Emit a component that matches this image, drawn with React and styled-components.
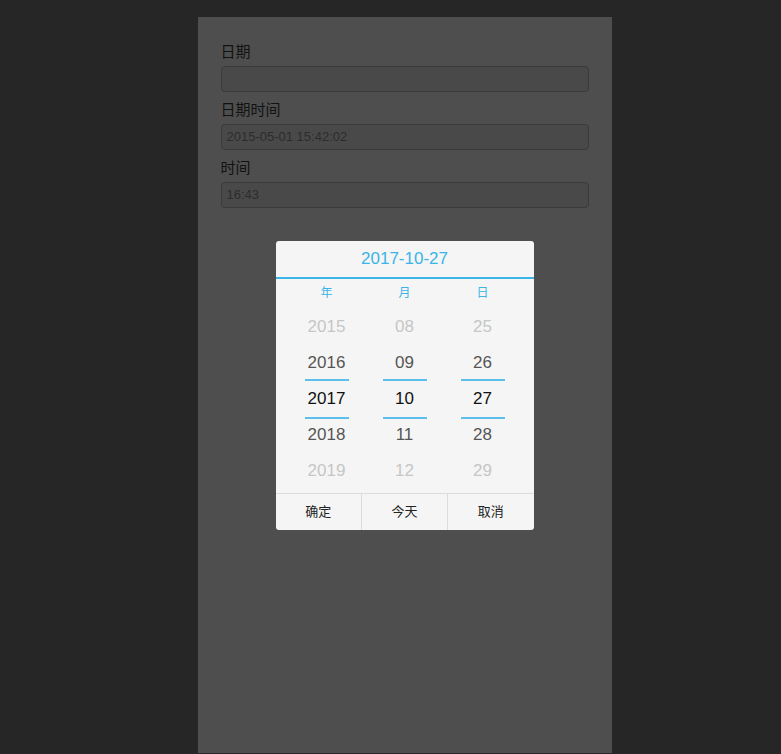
import React, { useState } from 'react';
import styled, { createGlobalStyle } from 'styled-components';

const GlobalStyle = createGlobalStyle`
  html, body {
    margin: 0;
    padding: 0;
    background: #262626;
    font-family: "Liberation Sans", "Noto Sans CJK SC", Arial, sans-serif;
  }
`;

const fields = [
  { label: '日期', value: '' },
  { label: '日期时间', value: '2015-05-01 15:42:02' },
  { label: '时间', value: '16:43' },
];

const columns = [
  { title: '年', items: ['2015', '2016', '2017', '2018', '2019'] },
  { title: '月', items: ['08', '09', '10', '11', '12'] },
  { title: '日', items: ['25', '26', '27', '28', '29'] },
];

function App() {
  const [selected] = useState('2017-10-27');

  return (
    <>
      <GlobalStyle />
      <Page>
        <Panel>
          {fields.map(f => (
            <Field key={f.label}>
              <Label>{f.label}</Label>
              <Input>{f.value}</Input>
            </Field>
          ))}

          <Picker>
            <Title>{selected}</Title>
            <Columns>
              {columns.map(col => (
                <Column key={col.title}>
                  <ColTitle>{col.title}</ColTitle>
                  {col.items.map((item, i) => (
                    <Item key={item} $dist={Math.abs(i - 2)}>{item}</Item>
                  ))}
                </Column>
              ))}
            </Columns>
            <Footer>
              <Btn>确定</Btn>
              <Btn>今天</Btn>
              <Btn>取消</Btn>
            </Footer>
          </Picker>
        </Panel>
      </Page>
    </>
  );
}

export default App;

const Page = styled.div`
  min-height: 754px;
  padding: 17px 0 0 28px;
  box-sizing: border-box;
`;

const Panel = styled.div`
  position: relative;
  width: 414px;
  height: 736px;
  margin: 0 auto;
  box-sizing: border-box;
  padding: 25px 23px;
  background: #4e4e4e;
`;

const Field = styled.div`
  margin-bottom: 8px;
`;

const Label = styled.div`
  height: 20px;
  line-height: 20px;
  font-size: 15px;
  color: #121212;
  margin-bottom: 4px;
`;

const Input = styled.div`
  height: 26px;
  box-sizing: border-box;
  border: 1px solid #3a3a3a;
  border-radius: 4px;
  background: #494949;
  padding: 0 5px;
  line-height: 24px;
  font-size: 13px;
  color: #2c2c2c;
`;

const Picker = styled.div`
  position: absolute;
  left: 78px;
  top: 224px;
  width: 258px;
  height: 289px;
  background: #f5f5f5;
  border-radius: 3px;
  display: flex;
  flex-direction: column;
  overflow: hidden;
`;

const Title = styled.div`
  height: 36px;
  line-height: 36px;
  text-align: center;
  font-size: 17px;
  color: #3bb4e8;
  border-bottom: 2px solid #3bb4e8;
`;

const Columns = styled.div`
  display: flex;
  padding: 0 12px;
  height: 214px;
`;

const Column = styled.div`
  width: 78px;
  display: flex;
  flex-direction: column;
  align-items: center;
`;

const ColTitle = styled.div`
  height: 30px;
  line-height: 28px;
  font-size: 12px;
  color: #3bb4e8;
`;

const Item = styled.div`
  position: relative;
  width: 44px;
  height: 36px;
  line-height: 36px;
  text-align: center;
  font-size: 17px;
  color: ${p => (p.$dist === 0 ? '#111' : p.$dist === 1 ? '#555' : '#c6c6c6')};

  ${p => p.$dist === 0 && `
    &::before, &::after {
      content: '';
      position: absolute;
      left: 0;
      right: 0;
      height: 2px;
      background: #5bc0eb;
    }
    &::before { top: -2px; }
    &::after { bottom: -2px; }
  `}
`;

const Footer = styled.div`
  display: flex;
  margin-top: auto;
  height: 36px;
  border-top: 1px solid #dcdcdc;
`;

const Btn = styled.div`
  flex: 1;
  text-align: center;
  line-height: 36px;
  font-size: 13px;
  color: #222;
  & + & {
    border-left: 1px solid #dcdcdc;
  }
`;
